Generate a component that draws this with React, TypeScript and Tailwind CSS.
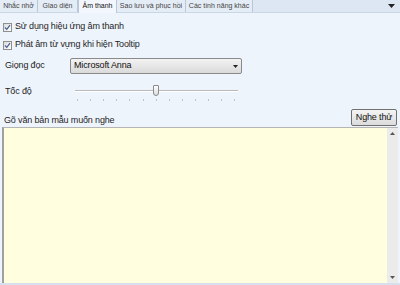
import React from "react";

const tabs = [
  { t: "Nhắc nhở", w: "w-[38px]" },
  { t: "Giao diện", w: "w-[40px]" },
  { t: "Âm thanh", w: "w-[39px]" },
  { t: "Sao lưu và phục hồi", w: "w-[69px]" },
  { t: "Các tính năng khác", w: "w-[67px]" },
];

function Check({ label }: { label: string }) {
  return (
    <div className="flex items-center h-[14px]">
      <div className="w-[9px] h-[9px] border border-[#8e8f8f] bg-gradient-to-br from-[#dcdcdc] to-[#ffffff] flex items-center justify-center ml-[3px]">
        <svg width="7" height="7" viewBox="0 0 7 7">
          <path d="M1 3.5 L2.8 5.3 L6 1.2" fill="none" stroke="#4a5f8f" strokeWidth="1.2" />
        </svg>
      </div>
      <span className="ml-[3px] text-[9px] tracking-[-0.15px] text-[#1e1e1e]">{label}</span>
    </div>
  );
}

export default function App() {
  const ticks = Array.from({ length: 13 }, (_, i) => i);
  return (
    <div
      className="w-[400px] h-[285px] bg-[#eef4fc] flex flex-col overflow-hidden"
      style={{ fontFamily: '"Liberation Sans", Arial, sans-serif' }}
    >
      <div className="h-[13px] bg-[#dde7f3] flex items-stretch border-b border-[#c9d6e6] relative">
        {tabs.map((x, i) => (
          <div
            key={x.t}
            className={
              i === 2
                ? `${x.w} text-center text-[7px] leading-[12px] text-[#111] bg-[#f3f7fd] border-x border-[#b9c7d9] -mb-px`
                : `${x.w} text-center text-[7px] leading-[12px] text-[#444] bg-[#e4ecf6] border-r border-[#b9c7d9]`
            }
          >
            {x.t}
          </div>
        ))}
        <div className="absolute right-[5px] top-[4px]">
          <svg width="7" height="4" viewBox="0 0 7 4">
            <path d="M0 0 L7 0 L3.5 4 Z" fill="#222" />
          </svg>
        </div>
      </div>

      <div className="flex flex-col pt-[7px]">
        <Check label="Sử dụng hiệu ứng âm thanh" />
        <div className="h-[4px]" />
        <Check label="Phát âm từ vựng khi hiện Tooltip" />

        <div className="flex items-center mt-[6px] h-[16px]">
          <span className="w-[70px] pl-[5px] text-[9px] tracking-[-0.15px] text-[#1e1e1e]">Giọng đọc</span>
          <div className="w-[172px] h-[16px] border border-[#8a8a8a] rounded-[2px] bg-gradient-to-b from-[#f3f3f3] to-[#dadada] flex items-center justify-between px-[3px]">
            <span className="text-[9px] tracking-[-0.15px] text-[#111]">Microsoft Anna</span>
            <svg width="5" height="3" viewBox="0 0 5 3">
              <path d="M0 0 L5 0 L2.5 3 Z" fill="#222" />
            </svg>
          </div>
        </div>

        <div className="flex items-start mt-[9px] h-[20px]">
          <span className="w-[70px] pl-[5px] text-[9px] tracking-[-0.15px] text-[#1e1e1e] mt-[2px]">Tốc độ</span>
          <div className="relative w-[168px] h-[20px]">
            <div className="absolute left-[5px] right-[0px] top-[7px] h-[1px] bg-[#b9b9b9]" />
            <div className="absolute left-[5px] right-[0px] top-[8px] h-[1px] bg-[#ffffff]" />
            <div className="absolute left-[83px] top-[2px] w-[6px] h-[11px] border border-[#8a8a8a] rounded-b-[3px] rounded-t-[1px] bg-gradient-to-b from-[#fdfdfd] to-[#dedede]" />
            {ticks.map((i) => (
              <div
                key={i}
                className="absolute top-[16px] w-[1px] h-[2px] bg-[#c2c2c2]"
                style={{ left: 7 + i * 13.1 }}
              />
            ))}
          </div>
        </div>

        <div className="flex items-end justify-between mt-[6px] pr-[3px]">
          <span className="pl-[4px] text-[9px] tracking-[-0.15px] text-[#1e1e1e] -mb-[1px]">Gõ văn bản mẫu muốn nghe</span>
          <div className="w-[46px] h-[17px] border border-[#707070] rounded-[2px] bg-gradient-to-b from-[#f4f4f4] to-[#dcdcdc] flex items-center justify-center text-[9px] tracking-[-0.15px] text-[#111]">
            Nghe thử
          </div>
        </div>
      </div>

      <div className="mx-[2px] mt-[1px] h-[156px] flex border-l-2 border-t border-[#a0a0a0] border-t-[#b5b5b5] bg-[#ffffe0]">
        <div className="flex-1" />
        <div className="w-[11px] bg-[#ebebeb] flex flex-col justify-between items-center py-[4px]">
          <svg width="5" height="3" viewBox="0 0 5 3">
            <path d="M0 3 L5 3 L2.5 0 Z" fill="#555" />
          </svg>
          <svg width="5" height="3" viewBox="0 0 5 3">
            <path d="M0 0 L5 0 L2.5 3 Z" fill="#555" />
          </svg>
        </div>
      </div>
      <div className="h-[2px] mx-[0px] bg-[#d6e0ee]" />
    </div>
  );
}
